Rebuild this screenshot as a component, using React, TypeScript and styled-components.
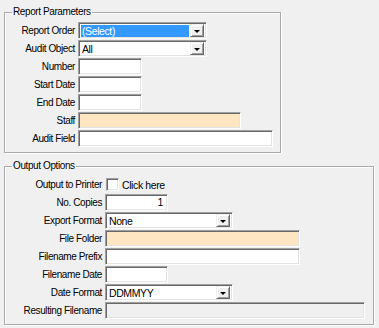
import React from 'react'
import styled, { createGlobalStyle } from 'styled-components'

const GlobalStyle = createGlobalStyle`
    html, body {
        margin: 0;
        padding: 0;
        background: #f0f0f0;
    }
    body {
        font-family: "Liberation Sans", Arial, sans-serif;
        font-size: 10px;
        letter-spacing: -0.4px;
        color: #000;
    }
`

const Page = styled.div`
    width: 379px;
    height: 328px;
    padding: 6px 0 0 4px;
    box-sizing: border-box;
    display: flex;
    flex-direction: column;
    gap: 7px;
`

const Group = styled.fieldset<{ $width: number; $labelWidth: number }>`
    width: ${p => p.$width}px;
    box-sizing: border-box;
    margin: 0;
    padding: 4px 0 4px 0;
    border: 1px solid #a9a9a9;
    box-shadow: inset 1px 1px 0 #fff, 1px 1px 0 #fff;
    display: grid;
    grid-template-columns: ${p => p.$labelWidth}px 1fr;
    column-gap: 3px;
    grid-auto-rows: 18px;
`

const Legend = styled.legend`
    margin-left: 7px;
    padding: 0 1px;
    line-height: 12px;
    height: 12px;
`

const Label = styled.label`
    text-align: right;
    white-space: nowrap;
    line-height: 17px;
    height: 17px;
`

const Field = styled.div<{ $width: number; $bg?: string; $align?: string }>`
    width: ${p => p.$width}px;
    height: 17px;
    box-sizing: border-box;
    background: ${p => p.$bg || '#fff'};
    border: 1px solid;
    border-color: #a0a0a0 #fff #fff #a0a0a0;
    box-shadow: inset 1px 1px 0 #696969, inset -1px -1px 0 #e3e3e3;
    padding: 0 4px 0 3px;
    line-height: 15px;
    font-size: 10.5px;
    text-align: ${p => p.$align || 'left'};
    overflow: hidden;
    white-space: nowrap;
`

const Combo = styled.div<{ $width: number }>`
    width: ${p => p.$width}px;
    height: 17px;
    box-sizing: border-box;
    background: #fff;
    border: 1px solid;
    border-color: #a0a0a0 #fff #fff #a0a0a0;
    box-shadow: inset 1px 1px 0 #696969, inset -1px -1px 0 #e3e3e3;
    padding: 2px 2px 1px 2px;
    display: flex;
    gap: 1px;
`

const ComboText = styled.div<{ $selected?: boolean }>`
    flex: 1;
    background: ${p => (p.$selected ? '#3399ff' : 'transparent')};
    color: ${p => (p.$selected ? '#fff' : '#000')};
    padding-left: 1px;
    line-height: 13px;
    font-size: 10.5px;
    white-space: nowrap;
    overflow: hidden;
`

const ComboButton = styled.div`
    width: 14px;
    height: 13px;
    margin-top: -1px;
    box-sizing: border-box;
    background: #f0f0f0;
    border: 1px solid;
    border-color: #f0f0f0 #696969 #696969 #f0f0f0;
    box-shadow: inset 1px 1px 0 #fff, inset -1px -1px 0 #a0a0a0;
    display: flex;
    align-items: center;
    justify-content: center;
`

const Arrow = styled.span`
    width: 0;
    height: 0;
    border-left: 3px solid transparent;
    border-right: 3px solid transparent;
    border-top: 3px solid #000;
    margin-top: 1px;
`

const CheckRow = styled.div`
    display: flex;
    align-items: center;
    gap: 3px;
    height: 17px;
`

const CheckBox = styled.span`
    width: 13px;
    height: 13px;
    box-sizing: border-box;
    background: #fff;
    border: 1px solid;
    border-color: #a0a0a0 #fff #fff #a0a0a0;
    box-shadow: inset 1px 1px 0 #696969, inset -1px -1px 0 #e3e3e3;
    margin-left: 1px;
`

const CheckText = styled.span`
    font-size: 10.5px;
`

const PEACH = '#fee6c2'

function ComboBox({ width, value, selected }: { width: number; value: string; selected?: boolean }) {
    return (
        <Combo $width={width}>
            <ComboText $selected={selected}>{value}</ComboText>
            <ComboButton><Arrow /></ComboButton>
        </Combo>
    )
}

export default function App() {
    return (
        <>
            <GlobalStyle />
            <Page>
                <Group $width={277} $labelWidth={70}>
                    <Legend>Report Parameters</Legend>
                    <Label>Report Order</Label>
                    <ComboBox width={129} value="(Select)" selected />
                    <Label>Audit Object</Label>
                    <ComboBox width={129} value="All" />
                    <Label>Number</Label>
                    <Field $width={64} />
                    <Label>Start Date</Label>
                    <Field $width={64} />
                    <Label>End Date</Label>
                    <Field $width={64} />
                    <Label>Staff</Label>
                    <Field $width={163} $bg={PEACH} />
                    <Label>Audit Field</Label>
                    <Field $width={195} />
                </Group>

                <Group $width={370} $labelWidth={97}>
                    <Legend>Output Options</Legend>
                    <Label>Output to Printer</Label>
                    <CheckRow>
                        <CheckBox />
                        <CheckText>Click here</CheckText>
                    </CheckRow>
                    <Label>No. Copies</Label>
                    <Field $width={63} $align="right">1</Field>
                    <Label>Export Format</Label>
                    <ComboBox width={128} value="None" />
                    <Label>File Folder</Label>
                    <Field $width={195} $bg={PEACH} />
                    <Label>Filename Prefix</Label>
                    <Field $width={195} />
                    <Label>Filename Date</Label>
                    <Field $width={63} />
                    <Label>Date Format</Label>
                    <ComboBox width={128} value="DDMMYY" />
                    <Label>Resulting Filename</Label>
                    <Field $width={260} $bg="#f0f0f0" />
                </Group>
            </Page>
        </>
    )
}
